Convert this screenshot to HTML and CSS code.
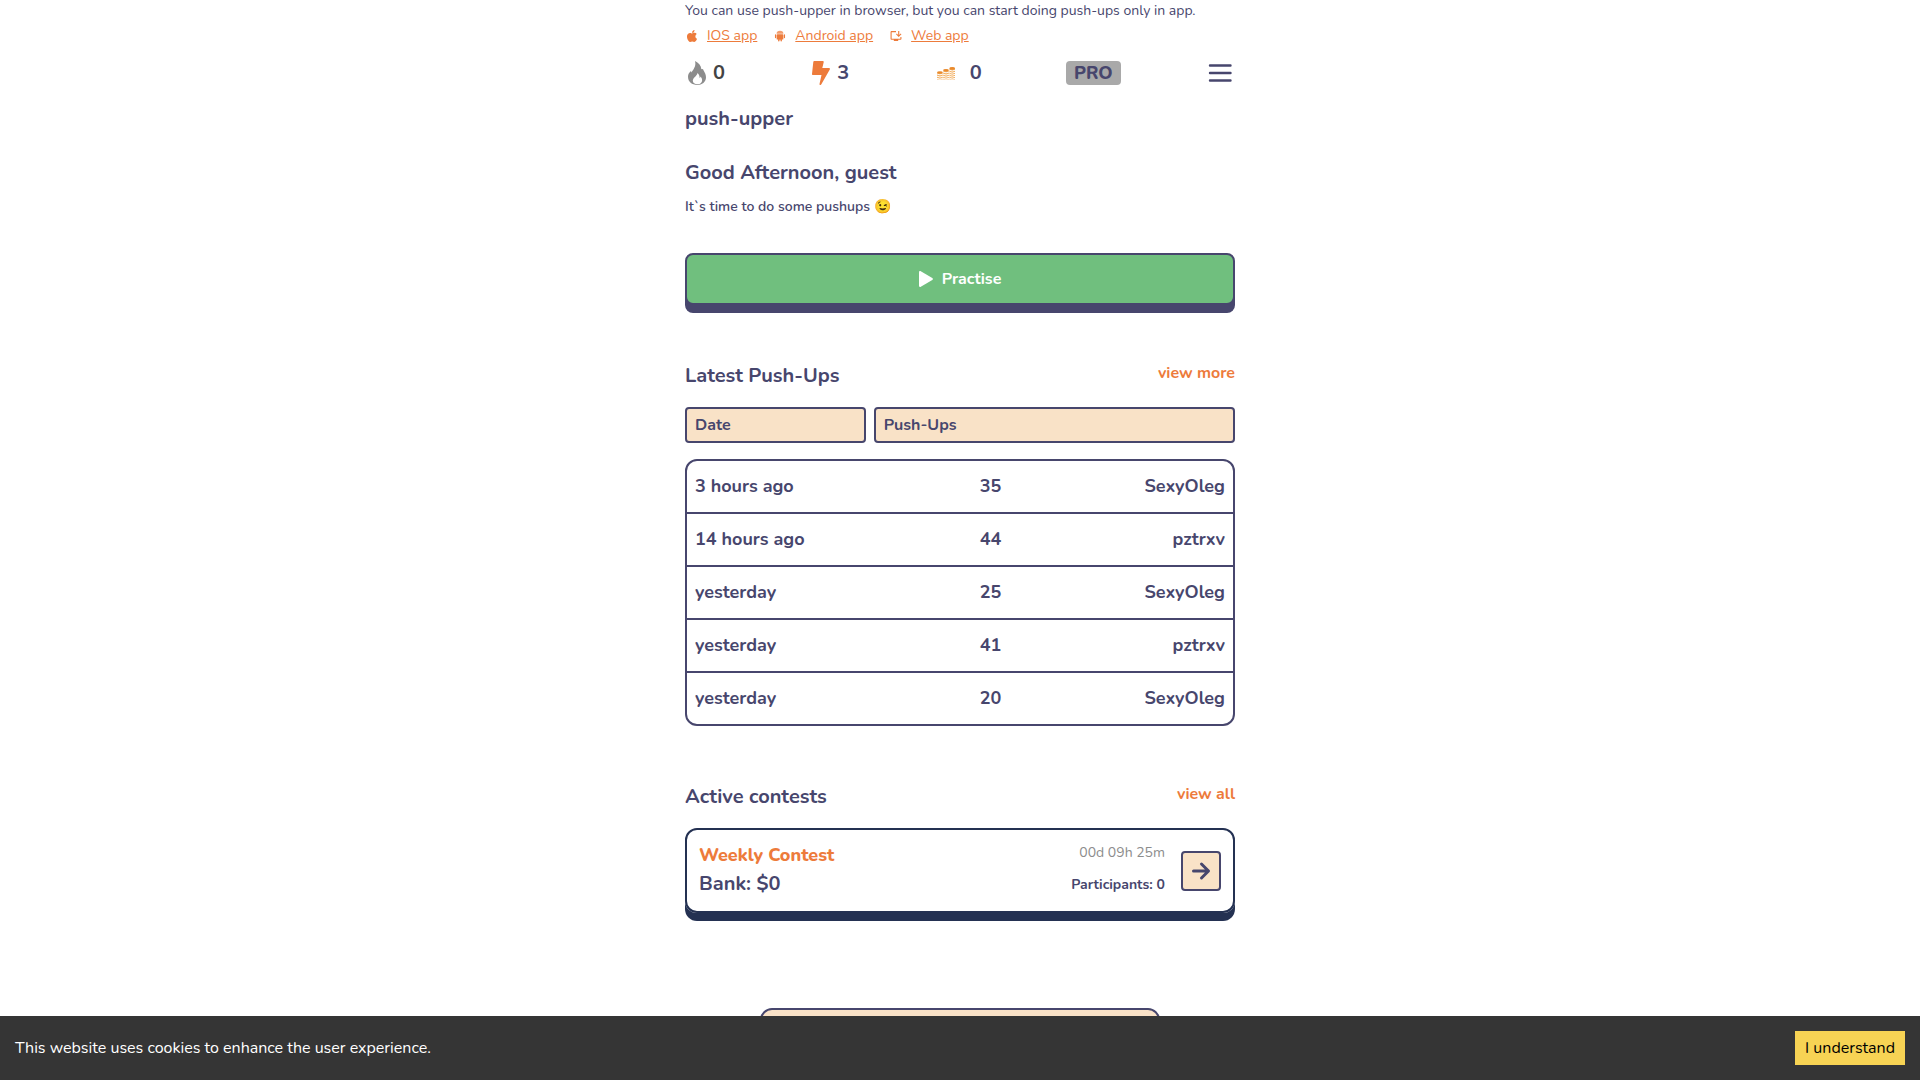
FILE: index.html
```
<!DOCTYPE html>
<html lang="en">
<head>
  <meta charset="utf-8">
  <meta name="viewport" content="width=device-width, initial-scale=1">
  <title>push-upper</title>
  <link rel="stylesheet" href="styles.css">
</head>
<body>
  <div class="page">
    <p class="notice">You can use push-upper in browser, but you can start doing push-ups only in app.</p>
    <nav class="apps" aria-label="Apps">
      <a class="app-link" href="#ios">
        <svg class="app-icon" viewBox="0 32 384 448" aria-hidden="true"><path d="M318.7 268.7c-.2-36.7 16.4-64.4 50-84.8-18.800-26.900-47.200-41.700-84.700-44.600-35.500-2.800-74.300 20.700-88.500 20.700-15 0-49.400-19.700-76.400-19.700C63.300 141.200 4 184.800 4 273.500q0 39.300 14.400 81.200c12.800 36.700 59 126.700 107.200 125.200 25.200-.6 43-17.900 75.800-17.900 31.800 0 48.300 17.900 76.400 17.900 48.600-.7 90.400-82.500 102.600-119.300-65.200-30.700-61.700-90-61.700-91.900zm-56.600-164.200c27.300-32.400 24.800-61.900 24-72.500-24.100 1.400-52 16.400-67.900 34.900-17.500 19.800-27.800 44.300-25.600 71.900 26.100 2 49.900-11.400 69.500-34.300z"/></svg>
        <span class="app-name">IOS app</span>
      </a>
      <a class="app-link" href="#android">
        <svg class="app-icon" viewBox="3 2 22 25" aria-hidden="true"><path d="M7 9.500a7 6 0 0 1 14 0v.5H7z" opacity=".75"/><rect x="7" y="11" width="14" height="11" rx="1.500"/><rect x="3.500" y="11" width="2.500" height="8" rx="1.200"/><rect x="22" y="11" width="2.500" height="8" rx="1.200"/><rect x="10" y="20" width="3" height="6" rx="1.500"/><rect x="15" y="20" width="3" height="6" rx="1.500"/></svg>
        <span class="app-name">Android app</span>
      </a>
      <a class="app-link" href="#web">
        <svg class="app-icon" viewBox="1 1 22 22" aria-hidden="true"><path d="M20 17H4V5h8V3H4c-1.110 0-2 .89-2 2v12c0 1.100.89 2 2 2h4v2h8v-2h4c1.100 0 2-.9 2-2v-3h-2z"/><path d="M17 14l5-5-1.410-1.410L18 10.170V3h-2v7.170l-2.590-2.580L12 9z"/></svg>
        <span class="app-name">Web app</span>
      </a>
    </nav>

    <header class="stats">
      <div class="stat stat-streak">
        <svg class="stat-icon" viewBox="0 0 24 24" aria-hidden="true"><path fill="#8c8c8c" fill-rule="evenodd" d="M10 0c3.500 1.500 6 4.500 6.400 8.300C17.800 7.500 18.400 8.500 18.600 9.600 20 12 21 13.800 21 16.200 21 21 17 24 12.200 24 7 24 3 20.800 3 15.800c0-2.600 1.100-4.300 3-5.900l.5 1.600C8.200 8.500 11.500 5.300 10 0zm2.400 12c.2 2.600-4.600 4.600-4.600 7.800 0 2.100 2 3.500 4.600 3.500s4.700-1.500 4.700-3.900c0-1.400-.6-2.700-1.500-3.900-.2.800-.5 1.300-1 1.500.1-2-.6-3.800-2.200-5z"/></svg>
        <span>0</span>
      </div>
      <div class="stat">
        <svg class="stat-icon" viewBox="0 0 24 24" aria-hidden="true"><path fill="#ed7b3b" d="M5.200 0h8.600c.7 0 1.100.5.900 1.200L13.300 7h6.600c.8 0 1.300.8.900 1.500l-8.600 15c-.6 1-1.900.5-1.700-.5l2-8.900H4c-.7 0-1.100-.5-1-1.200L4.300.9C4.400.4 4.700 0 5.200 0z"/></svg>
        <span>3</span>
      </div>
      <div class="stat stat-coins">
        <svg class="stat-icon" viewBox="0 0 24 24" aria-hidden="true">
          <g fill="#f3b062"><path d="M3 12h5.700v6.500H3zM9.200 10h5.700v8.500H9.200zM15.400 8H21v10.500h-5.600z"/></g>
          <g fill="none" stroke="#fff" stroke-width="1"><path d="M3 13q2.900 1.700 5.900 0M3 15.200q2.900 1.700 5.900 0M3 17.300q2.900 1.700 5.900 0M9.100 11q2.900 1.700 6 0M9.100 13.200q2.900 1.700 6 0M9.100 15.300q2.900 1.700 6 0M9.100 17.300q2.900 1.500 6 0M15.300 9.200q2.900 1.700 5.900 0M15.300 11.300q2.900 1.700 5.900 0M15.300 13.300q2.900 1.700 5.900 0M15.300 15.300q2.900 1.700 5.900 0M15.300 17.300q2.900 1.500 5.900 0"/></g>
          <g fill="#ea8a2c"><ellipse cx="5.900" cy="11.500" rx="2.900" ry="1.300"/><ellipse cx="12" cy="9.300" rx="2.900" ry="1.300"/><ellipse cx="18.200" cy="7.400" rx="2.900" ry="1.300"/></g>
        </svg>
        <span>0</span>
      </div>
      <span class="pro">PRO</span>
      <button class="menu" type="button" aria-label="Menu">
        <svg class="menu-icon" viewBox="0 0 30 24" aria-hidden="true"><path d="M5 4.500h20.500M5 12h20.500M5 19.500h20.500"/></svg>
      </button>
    </header>

    <main>
      <h1 class="title">push-upper</h1>
      <h2 class="title greeting">Good Afternoon, guest</h2>
      <p class="prompt">It`s time to do some pushups 😉</p>

      <button class="practise" type="button">
        <svg class="play-icon" viewBox="0 0 14 16" aria-hidden="true"><path d="M0 1.200C0 .2.900-.3 1.800.2l11.500 6.900c.8.500.8 1.300 0 1.800L1.800 15.800c-.9.500-1.800 0-1.800-1z"/></svg>
        Practise
      </button>

      <section class="section">
        <div class="section-head">
          <h2 class="title">Latest Push-Ups</h2>
          <a class="more" href="#push-ups">view more</a>
        </div>
        <table class="log">
          <thead>
            <tr class="log-head"><th scope="col">Date</th><th scope="col" colspan="2">Push-Ups</th></tr>
          </thead>
          <tbody class="log-body">
            <tr class="log-row"><td>3 hours ago</td><td>35</td><td class="who">SexyOleg</td></tr>
            <tr class="log-row"><td>14 hours ago</td><td>44</td><td class="who">pztrxv</td></tr>
            <tr class="log-row"><td>yesterday</td><td>25</td><td class="who">SexyOleg</td></tr>
            <tr class="log-row"><td>yesterday</td><td>41</td><td class="who">pztrxv</td></tr>
            <tr class="log-row"><td>yesterday</td><td>20</td><td class="who">SexyOleg</td></tr>
          </tbody>
        </table>
      </section>

      <section class="section section-contests">
        <div class="section-head">
          <h2 class="title">Active contests</h2>
          <a class="more" href="#contests">view all</a>
        </div>
        <article class="contest">
          <div class="contest-main">
            <h3 class="contest-name">Weekly Contest</h3>
            <p class="contest-bank">Bank: $0</p>
          </div>
          <div class="contest-meta">
            <p class="contest-time">00d 09h 25m</p>
            <p class="contest-people">Participants: 0</p>
          </div>
          <button class="open" type="button" aria-label="Open contest">
            <svg class="open-icon" viewBox="0 0 20 20" aria-hidden="true"><path d="M2.500 10h14M10.500 3l7 7-7 7"/></svg>
          </button>
        </article>
      </section>

      <div class="panel"></div>
    </main>
  </div>

  <div class="cookies">
    <p class="cookies-text">This website uses cookies to enhance the user experience.</p>
    <button class="accept" type="button">I understand</button>
  </div>
</body>
</html>
```
FILE: styles.css
```
:root {
  --ink: #47466d;
  --orange: #ed7b3b;
  --peach: #f9e2c7;
  --navy: #243152;
}

* {
  box-sizing: border-box;
}

body {
  margin: 0;
  background: #fff;
  color: var(--ink);
  font: 400 14px/20px Nunito, "Noto Sans", sans-serif;
}

h1, h2, h3, p {
  margin: 0;
}

button {
  font: inherit;
  cursor: pointer;
}

a {
  color: var(--orange);
}

.page {
  max-width: 550px;
  margin: 0 auto;
}

.notice {
  line-height: 22px;
}

.apps {
  display: flex;
  gap: 16px;
  margin-top: 4px;
}

.app-link {
  display: flex;
  align-items: center;
  gap: 8px;
  text-decoration: none;
}

.app-name {
  text-decoration: underline;
}

.app-icon {
  width: 14px;
  height: 12px;
  fill: currentColor;
}

.stats {
  display: flex;
  justify-content: space-between;
  align-items: center;
  margin-top: 15px;
}

.stat {
  display: flex;
  gap: 4px;
  font-size: 20px;
  font-weight: 700;
  line-height: 24px;
}

.stat-streak {
  color: #444;
}

.stat-coins {
  gap: 12px;
}

.stat-icon {
  width: 24px;
  height: 24px;
}

.pro {
  padding: 0 8px;
  border-radius: 4px;
  background: #a9a9a9;
  font-size: 18px;
  font-weight: 800;
  line-height: 24px;
}

.menu {
  display: flex;
  padding: 0;
  border: 0;
  background: none;
}

.menu-icon {
  width: 30px;
  height: 24px;
  fill: none;
  stroke: var(--ink);
  stroke-width: 2.4;
  stroke-linecap: round;
}

.title {
  font-size: 20px;
  font-weight: 700;
  line-height: 28px;
}

h1.title {
  margin-top: 20px;
}

.greeting {
  margin-top: 26px;
}

.prompt {
  margin-top: 10px;
  font-weight: 600;
}

.practise {
  display: flex;
  justify-content: center;
  align-items: center;
  gap: 9px;
  width: 100%;
  margin-top: 36px;
  padding: 12px;
  border: 2px solid var(--ink);
  border-radius: 8px;
  background: #70bf7e;
  box-shadow: 0 8px 0 var(--ink);
  color: #fff;
  font-size: 16px;
  font-weight: 700;
  line-height: 24px;
}

.play-icon {
  width: 14px;
  height: 16px;
  fill: currentColor;
}

.section {
  margin-top: 56px;
}

.section-head {
  display: flex;
  justify-content: space-between;
  align-items: flex-start;
  margin-bottom: 16px;
}

.section-head .title {
  line-height: 30px;
}

.more {
  font-size: 16px;
  font-weight: 700;
  line-height: 24px;
  text-decoration: none;
}

.log {
  display: flex;
  flex-direction: column;
  gap: 16px;
}

.log-head {
  display: grid;
  grid-template-columns: 1fr 2fr;
  gap: 8px;
}

.log th {
  padding: 4px 8px;
  border: 2px solid var(--ink);
  border-radius: 4px;
  background: var(--peach);
  font-size: 16px;
  font-weight: 700;
  line-height: 24px;
  text-align: left;
}

.log-body {
  display: block;
  border: 2px solid var(--ink);
  border-radius: 12px;
}

.log-row {
  display: grid;
  grid-template-columns: 14fr auto 11fr;
  padding: 13px 8px;
  font-size: 18px;
  font-weight: 700;
  line-height: 25px;
}

.log-row + .log-row {
  border-top: 2px solid var(--ink);
}

.log td {
  padding: 0;
}

.who {
  text-align: right;
}

.contest {
  display: flex;
  align-items: center;
  gap: 16px;
  padding: 13px 12px;
  border: 2px solid var(--navy);
  border-radius: 12px;
  box-shadow: 0 8px 0 var(--navy);
}

.contest-main {
  flex: 1;
}

.contest-name {
  margin-bottom: 3px;
  color: var(--orange);
  font-size: 18px;
  font-weight: 800;
  line-height: 24px;
}

.contest-bank {
  font-size: 20px;
  font-weight: 700;
  line-height: 28px;
}

.contest-meta {
  display: flex;
  flex-direction: column;
  align-self: flex-start;
  gap: 12px;
  text-align: right;
}

.contest-time {
  color: #8c8c8c;
}

.contest-people {
  font-weight: 700;
}

.open {
  display: flex;
  justify-content: center;
  align-items: center;
  width: 40px;
  height: 40px;
  padding: 0;
  border: 2px solid var(--ink);
  border-radius: 4px;
  background: var(--peach);
}

.open-icon {
  width: 20px;
  height: 20px;
  fill: none;
  stroke: var(--ink);
  stroke-width: 3;
  stroke-linecap: round;
  stroke-linejoin: round;
}

.panel {
  max-width: 400px;
  height: 56px;
  margin: 95px auto 0;
  border: 2px solid var(--ink);
  border-radius: 12px;
  background: var(--peach);
}

.cookies {
  position: fixed;
  right: 0;
  bottom: 0;
  left: 0;
  display: flex;
  justify-content: space-between;
  align-items: center;
  padding: 15px;
  background: #353535;
  color: #fff;
  font-size: 16px;
  line-height: 24px;
}

.accept {
  padding: 5px 10px;
  border: 0;
  background: #f7d354;
  color: #000;
}
```
